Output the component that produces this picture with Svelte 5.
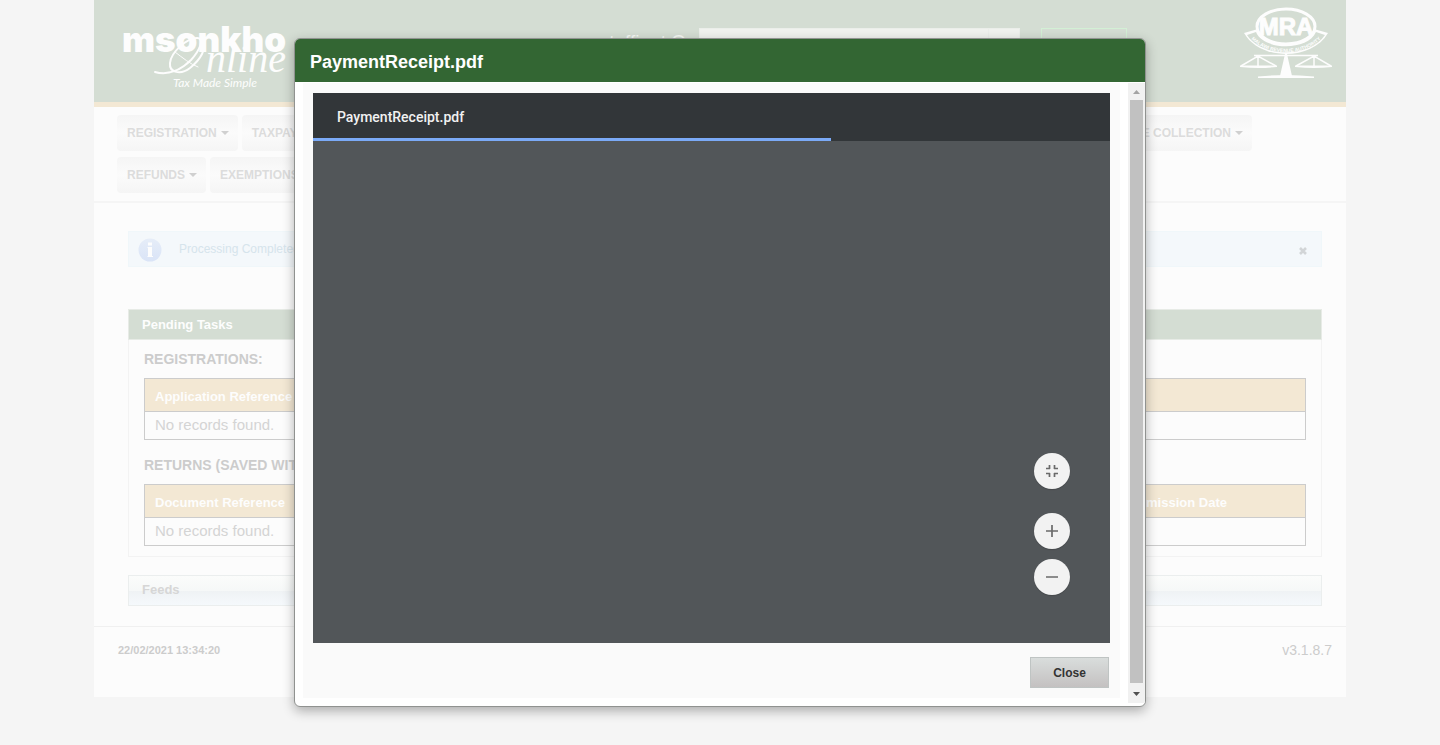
<script>
  const navRows = [
    { left: ['REGISTRATION', 'TAXPAYER'], right: ['REVENUE COLLECTION'] },
    { left: ['REFUNDS', 'EXEMPTIONS'], right: [] }
  ];
  const tasks = [
    { title: 'REGISTRATIONS:', columns: ['Application Reference', ''] },
    { title: 'RETURNS (SAVED WITHOUT', columns: ['Document Reference', 'Submission Date'] }
  ];
  let progress = $state(65);
</script>

<div class="page">
  <header>
    <svg class="brand" viewBox="0 0 180 70" role="img" aria-label="msonkho Online">
      <text class="word" x="0" y="29">msonkho</text>
      <text class="script" x="84" y="49">nline</text>
      <g fill="none" stroke="#fdfdfd" stroke-linecap="round">
        <path stroke-width="2" d="M33 49c14 4 27-3 36-12 9-10 14-22 6-22-10 0-26 14-27 25-1 10 11 12 20 5 10-8 18-20 12-28" />
        <path stroke-width="1" d="M53 29c8 6 15 12 23 15" />
      </g>
      <text class="tag" x="51" y="64">Tax Made Simple</text>
    </svg>
    <form class="search">
      <label for="tin">matoffinat O</label>
      <div class="field"><input id="tin" type="text" /><span></span></div>
      <button type="button" aria-label="Search"></button>
    </form>
    <svg class="mra" viewBox="0 0 92 70" role="img" aria-label="MRA">
      <path fill="#fdfdfd" d="M4 25l14-4h56l14 4C72 53 20 53 4 25z" />
      <path fill="#d4ddd3" d="M7 27l9-3c8 19 52 19 60 0l9 3C70 50 22 50 7 27z" />
      <ellipse cx="46" cy="18.500" rx="29" ry="17.500" fill="#d4ddd3" stroke="#fdfdfd" stroke-width="3" />
      <text class="initials" x="46" y="27" text-anchor="middle">MRA</text>
      <path id="arc" fill="none" d="M8 27C24 50 68 50 84 27" />
      <text class="ribbon"><textPath href="#arc" startOffset="50%" text-anchor="middle">MALAWI REVENUE AUTHORITY</textPath></text>
      <g fill="#fdfdfd">
        <path d="M45 46h2l5 22H40z" />
        <path d="M18 68.500q28-3 56 0v1.500H18z" />
        <path d="M0 57.500h37v1.500q-18 2-37 0zM55 57.500h37v1.500q-18 2-37 0z" />
      </g>
      <path fill="none" stroke="#fdfdfd" stroke-width="1.500" d="M14 47.500h64M18 47v11M74 47v11M1 58l17-10 18 10M56 58l18-10 17 10" />
    </svg>
  </header>

  <nav>
    {#each navRows as row}
      <div class="nav-row">
        {#each row.left as item}<button>{item}<i></i></button>{/each}
        <span class="spacer"></span>
        {#each row.right as item}<button>{item}<i></i></button>{/each}
      </div>
    {/each}
  </nav>

  <main>
    <div class="message">
      <svg class="info" viewBox="0 0 24 24" aria-hidden="true">
        <defs>
          <linearGradient id="ball" x1="0" y1="0" x2="0" y2="1">
            <stop offset="0" stop-color="#e6edf8" />
            <stop offset="1" stop-color="#dae4f7" />
          </linearGradient>
        </defs>
        <circle cx="12" cy="12" r="11.500" fill="url(#ball)" />
        <path fill="#fdfdfd" d="M10 4.500h4v3h-4zM9.500 9H14v9h1v1H9.500v-1h.5v-8h-.5z" />
      </svg>
      <span>Processing Completed</span>
      <button class="dismiss" aria-label="Dismiss">
        <svg viewBox="0 0 8 8"><path d="M1 1l6 6M7 1l-6 6" stroke="#d2d5d7" stroke-width="2.600" /></svg>
      </button>
    </div>

    <section class="panel">
      <h2>Pending Tasks</h2>
      <div class="panel-body">
        {#each tasks as task}
          <h3>{task.title}</h3>
          <table>
            <thead>
              <tr>{#each task.columns as column}<th>{column}</th>{/each}</tr>
            </thead>
            <tbody>
              <tr><td colspan="2">No records found.</td></tr>
            </tbody>
          </table>
        {/each}
      </div>
    </section>

    <section class="feeds"><h2>Feeds</h2></section>
  </main>

  <footer>
    <time>22/02/2021 13:34:20</time>
    <span>v3.1.8.7</span>
  </footer>
</div>

<div class="overlay">
  <div class="dialog" role="dialog" aria-labelledby="dialog-title">
    <h1 id="dialog-title">PaymentReceipt.pdf</h1>
    <div class="dialog-body">
      <div class="sheet">
        <div class="viewer">
          <div class="toolbar">
            <span>PaymentReceipt.pdf</span>
            <div class="progress" style="width: {progress}%"></div>
          </div>
          <div class="zoom">
            <button class="fit" aria-label="Fit to page">
              <svg viewBox="0 0 12 12"><path d="M0 3.500h4M3.500 0v4M8 3.500h4M8.500 0v4M0 8.500h4M3.500 8v4M8 8.500h4M8.500 8v4" /></svg>
            </button>
            <button aria-label="Zoom in">
              <svg viewBox="0 0 12 12"><path d="M0 6h12M6 0v12" /></svg>
            </button>
            <button aria-label="Zoom out">
              <svg viewBox="0 0 12 12"><path d="M0 6h12" /></svg>
            </button>
          </div>
        </div>
        <button class="close">Close</button>
      </div>
      <div class="scrollbar">
        <svg viewBox="0 0 17 17"><path d="M5 11h7L8.500 7z" fill="#a3a3a3" /></svg>
        <div class="thumb"></div>
        <svg viewBox="0 0 17 17"><path d="M5 6h7l-3.500 4z" fill="#505050" /></svg>
      </div>
    </div>
  </div>
</div>

<style>
  :global(body) {
    background: #f5f5f5;
    font-family: "Liberation Sans", Arial, sans-serif;
  }
  .page, .page *, .overlay, .overlay * { box-sizing: border-box; }
  h1, h2, h3 { margin: 0; }
  button { font-family: inherit; padding: 0; }

  .page {
    margin: 0 94px;
    background: #fcfcfc;
    color: #d4d4d4;
    overflow: hidden;
  }
  header {
    display: flex;
    align-items: flex-start;
    height: 107px;
    padding: 0 14px 0 28px;
    background: #d4ddd3;
    border-bottom: 5px solid #f3e8d4;
  }
  .brand { width: 180px; height: 70px; margin-top: 23px; overflow: visible; }
  .brand text { fill: #fdfdfd; }
  .word { font: 900 35px Inter, sans-serif; }
  .script { font: italic 40px "Liberation Serif", serif; }
  .tag { font: italic 12px Lato, sans-serif; }
  .search { display: flex; margin-left: auto; padding-top: 28px; }
  .search label {
    padding: 3px 13px 0 0;
    font-size: 19px;
    line-height: 22px;
    color: #f6f8f5;
  }
  .field {
    display: flex;
    width: 321px;
    height: 32px;
    background: #f0f2ee;
    border: 1px solid #ebeeea;
  }
  .field input { flex: 1; min-width: 0; border: 0; background: none; }
  .field span { flex: none; width: 31px; border-left: 1px solid #ebeeea; }
  .search button {
    width: 86px;
    height: 32px;
    margin: 0 113px 0 21px;
    background: none;
    border: 1px solid #d3f0d5;
  }
  .mra { width: 92px; height: 70px; margin-top: 8px; overflow: visible; }
  .mra text { fill: #fdfdfd; }
  .initials { font: bold 24px "Liberation Sans", sans-serif; stroke: #fdfdfd; stroke-width: 1px; }
  .ribbon { font: bold 5px "Liberation Sans", sans-serif; }

  nav {
    display: flex;
    flex-direction: column;
    gap: 6px;
    padding: 8px 94px 8px 23px;
    border-bottom: 2px solid #f5f5f5;
  }
  .nav-row { display: flex; gap: 4px; }
  .spacer { flex: 1; }
  nav button {
    display: flex;
    align-items: center;
    gap: 4px;
    height: 36px;
    padding: 0 9px 0 10px;
    border: 0;
    border-radius: 4px;
    background: linear-gradient(#f5f5f5, #fbfbfb 50%, #f5f5f5);
    color: #dcdcdc;
    font-size: 12px;
    font-weight: bold;
  }
  nav i {
    border: 4px solid transparent;
    border-top-color: #d0d0d0;
    border-bottom: 0;
  }

  main { padding: 28px 24px 20px 34px; }
  .message {
    display: flex;
    align-items: center;
    height: 36px;
    padding: 0 14px 0 9px;
    background: #f4f8fb;
    border: 1px solid #f0f7fa;
    color: #d6e4ec;
    font-size: 12px;
  }
  .info { width: 24px; height: 24px; margin: 2px 17px 0 0; }
  .dismiss { margin: 3px 0 0 auto; width: 8px; height: 8px; border: 0; background: none; line-height: 0; }
  .dismiss svg { width: 8px; height: 8px; }

  .panel { margin-top: 42px; }
  .panel h2, .feeds h2 {
    height: 31px;
    padding: 0 13px;
    border: 1px solid #e7ebe6;
    font-size: 13px;
    line-height: 29px;
  }
  .panel h2 { background: #d4ddd3; color: #fdfdfd; }
  .panel-body { padding: 11px 15px 10px; border: 1px solid #f3f3f3; border-top: 0; }
  h3 { font-size: 14px; line-height: 17px; color: #cccccc; padding-bottom: 10px; }
  table { width: 100%; border-collapse: collapse; table-layout: fixed; }
  table + h3 { padding-top: 17px; }
  th, td { text-align: left; padding: 0 10px; }
  th {
    height: 33px;
    padding-top: 2px;
    background: #f3e8d4;
    color: #fdfdfd;
    font-size: 13px;
  }
  th:last-child { width: 194px; }
  thead tr, tbody tr { border: 1px solid #cccccc; }
  td { height: 28px; padding-bottom: 2px; font-size: 15px; }
  .feeds { margin-top: 18px; }
  .feeds h2 {
    border-color: #ebeeee;
    background: linear-gradient(#fbfcfb, #f6f8f8 50%, #eff2f4 50%, #f5f9fc);
    color: #d6d6d6;
    line-height: 27px;
  }

  footer {
    display: flex;
    justify-content: space-between;
    align-items: flex-start;
    height: 71px;
    padding: 14px 14px 0 24px;
    border-top: 1px solid #f0f0f0;
    line-height: 18px;
    color: #cccccc;
  }
  time { font-size: 11px; font-weight: bold; }
  footer span { font-size: 14px; }

  .overlay {
    position: fixed;
    inset: 0;
    display: flex;
    align-items: center;
    justify-content: center;
  }
  .dialog {
    width: 852px;
    max-width: 100%;
    background: #ffffff;
    border: 1px solid #909290;
    border-radius: 6px;
    overflow: hidden;
    box-shadow: 0 4px 12px rgba(0, 0, 0, 0.3);
  }
  h1 {
    padding: 3px 15px 0;
    background: #336633;
    color: #ffffff;
    font-size: 18px;
    line-height: 40px;
  }
  .dialog-body { display: flex; padding: 1px 0 3px 8px; }
  .sheet {
    flex: 1;
    display: flex;
    flex-direction: column;
    margin: 0 8px 5px 0;
    padding: 10px;
    background: #fafafa;
  }
  .viewer { display: flex; flex-direction: column; min-height: 550px; background: #525659; }
  .toolbar {
    display: flex;
    flex-direction: column;
    justify-content: space-between;
    height: 48px;
    background: #323639;
    color: #f1f1f1;
    font: 500 14px Roboto, sans-serif;
  }
  .toolbar span { padding: 0 24px; line-height: 48px; height: 45px; }
  .progress { height: 3px; background: #7baaf7; }
  .zoom {
    flex: 1;
    display: flex;
    flex-direction: column;
    align-items: flex-end;
    justify-content: flex-end;
    gap: 10px;
    padding: 0 40px 48px;
  }
  .zoom button {
    display: flex;
    align-items: center;
    justify-content: center;
    width: 36px;
    height: 36px;
    border: 0;
    border-radius: 50%;
    background: #f2f2f2;
    box-shadow: 0 1px 1px rgba(0, 0, 0, 0.15);
  }
  .zoom .fit { margin-bottom: 14px; }
  .zoom svg { width: 12px; height: 12px; stroke: #6a6a6a; stroke-width: 1.700; fill: none; }
  .close {
    align-self: flex-end;
    width: 79px;
    height: 31px;
    margin: 14px 1px 0 0;
    border: 1px solid #bfc4c3;
    background: linear-gradient(#d9dddc, #c4c1c1);
    color: #333333;
    font-size: 12px;
    font-weight: bold;
  }
  .scrollbar {
    display: flex;
    flex-direction: column;
    width: 17px;
    background: #f1f1f1;
  }
  .scrollbar svg { width: 17px; height: 17px; flex: none; }
  .thumb { flex: 1; margin: 0 2px 3px; background: #c1c1c1; }
</style>
